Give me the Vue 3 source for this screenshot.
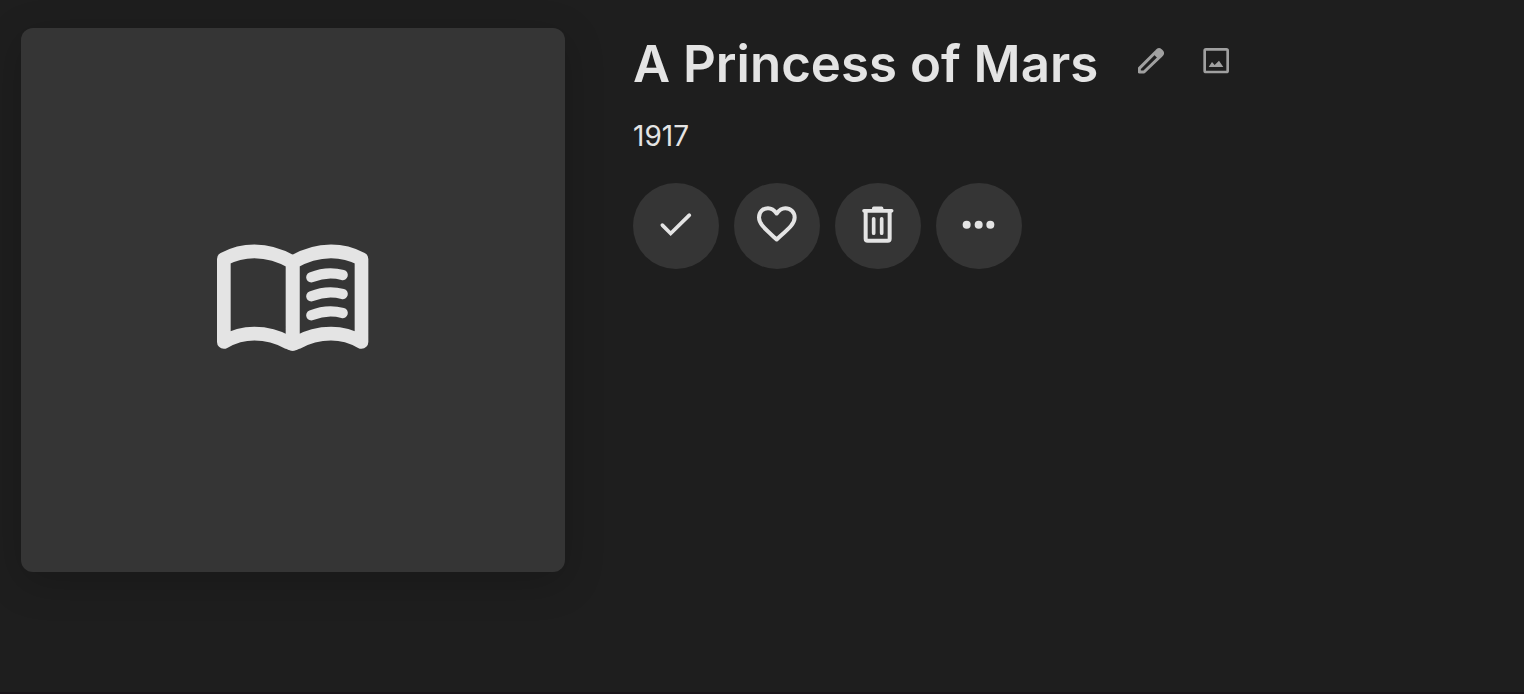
<script setup>
const title = 'A Princess of Mars'
const year = '1917'
</script>

<template>
  <main class="page">
    <div class="cover">
      <svg class="book" viewBox="51 42 456 324" role="img" aria-label="Book cover">
        <g fill="none" stroke="currentColor" stroke-linecap="round" stroke-linejoin="round">
          <g stroke-width="41">
            <path d="M278 97Q222 64 163 64Q115 64 71.500 87V336Q115 311 163 311Q217 311 266 338Q272 342 278 342Z" />
            <path d="M278 97Q334 64 393 64Q441 64 484.500 87V336Q441 311 393 311Q339 311 290 338Q284 342 278 342Z" />
          </g>
          <path stroke-width="31" d="M334 142Q381 123 428 135M334 199Q381 180 428 192M334 256Q381 237 428 249" />
        </g>
      </svg>
    </div>
    <section class="details">
      <header class="heading">
        <h1>{{ title }}</h1>
        <div class="tools">
          <button class="tool" type="button" aria-label="Edit details">
            <svg viewBox="48 54 78 78">
              <path d="M52 126V115L104 63Q110 56 116 61L119 64Q125 70 118 76L66 126Z" fill="none" stroke="currentColor" stroke-width="9" stroke-linejoin="round" />
              <path d="M94 72L105 61L118 60L121 73L109 87Z" fill="currentColor" />
            </svg>
          </button>
          <button class="tool" type="button" aria-label="Change image">
            <svg viewBox="243 54 78 78">
              <rect x="248" y="58" width="69" height="68" rx="4" fill="none" stroke="currentColor" stroke-width="8" />
              <path d="M260 111L270 96L278 105L291 92L304 111Z" fill="currentColor" />
            </svg>
          </button>
        </div>
      </header>
      <p class="year">{{ year }}</p>
      <div class="actions">
        <button class="action" type="button" aria-label="Mark as finished">
          <svg viewBox="39 39 258 255">
            <path d="M127 164L152 189L208 134" fill="none" stroke="currentColor" stroke-width="11" stroke-linecap="round" />
          </svg>
        </button>
        <button class="action" type="button" aria-label="Favorite">
          <svg viewBox="342 39 258 255">
            <path d="M470 207C434 174 417 160 417 141C417 124 429 113 444 113C455 113 463 119 470 129C477 119 485 113 496 113C511 113 524 124 524 141C524 160 506 174 470 207Z" fill="none" stroke="currentColor" stroke-width="12" stroke-linejoin="round" />
          </svg>
        </button>
        <button class="action" type="button" aria-label="Delete">
          <svg viewBox="33 39 258 255">
            <g fill="none" stroke="currentColor" stroke-linecap="round">
              <path d="M125 122V205Q125 211 131 211H191Q197 211 197 205V122" stroke-width="12" />
              <path d="M120 121H203M149 145V188M173 145V188" stroke-width="11" />
            </g>
            <rect x="144" y="108" width="34" height="14" rx="5" fill="currentColor" />
          </svg>
        </button>
        <button class="action" type="button" aria-label="More options">
          <svg viewBox="336 39 258 255" fill="currentColor">
            <circle cx="428" cy="163" r="12" />
            <circle cx="464" cy="163" r="12" />
            <circle cx="499" cy="163" r="12" />
          </svg>
        </button>
      </div>
    </section>
  </main>
</template>

<style>
body {
  margin: 0;
  background: #1e1e1e;
}
</style>

<style scoped>
.page {
  display: flex;
  align-items: flex-start;
  gap: 68px;
  padding: 28px 21px;
  box-sizing: border-box;
  min-height: 100vh;
  border-bottom: 2px solid #191419;
  color: #e4e4e4;
  font-family: Inter, "Liberation Sans", sans-serif;
}
.cover {
  display: flex;
  flex: none;
  align-items: center;
  justify-content: center;
  width: 544px;
  aspect-ratio: 1;
  border-radius: 12px;
  background: #353535;
  box-shadow: 0 10px 40px rgba(0, 0, 0, 0.2);
}
.book {
  width: 152px;
  height: 108px;
  margin-bottom: 4px;
}
.details {
  flex: 1;
  min-width: 0;
}
.heading {
  display: flex;
  align-items: flex-start;
  gap: 40px;
}
h1 {
  margin: 0;
  font-size: 51px;
  font-weight: 600;
  line-height: 72px;
}
.tools {
  display: flex;
  gap: 39px;
  padding-top: 20px;
}
button {
  padding: 0;
  border: 0;
  background: none;
  color: inherit;
  cursor: pointer;
}
svg {
  display: block;
}
.tool {
  color: #a0a0a0;
}
.tool svg {
  width: 26px;
  height: 26px;
}
.year {
  margin: 19px 0 30px;
  font-size: 28px;
  line-height: 34px;
}
.actions {
  display: flex;
  gap: 15px;
}
.action {
  width: 86px;
  height: 86px;
  border-radius: 50%;
  background: #353535;
}
.action svg {
  width: 100%;
  height: 100%;
}
</style>
